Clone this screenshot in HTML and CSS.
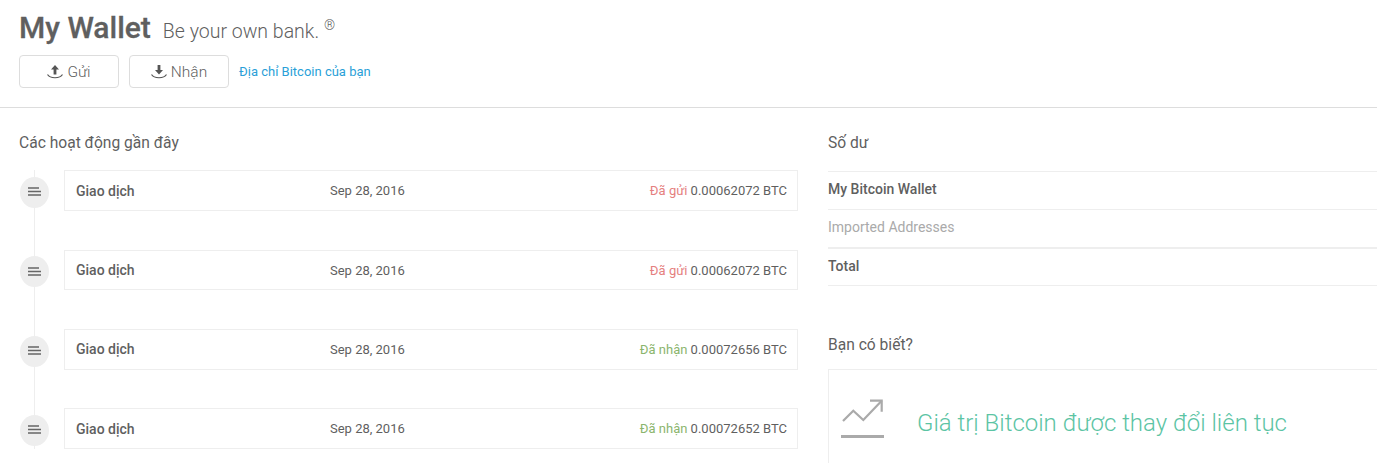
FILE: index.html
```html
<!DOCTYPE html>
<html lang="vi">
<head>
<meta charset="UTF-8">
<meta name="viewport" content="width=device-width, initial-scale=1.0">
<title>My Wallet</title>
<link rel="stylesheet" href="styles.css">
</head>
<body>
<header class="header">
  <div class="title-row">
    <h1>My Wallet</h1>
    <span class="tagline">Be your own bank.</span>
    <sup class="reg">®</sup>
  </div>
  <div class="actions">
    <button class="btn">
      <svg class="btn-icon" viewBox="0 0 16 14"><path d="M8 0 L12 4.5 H9.4 V9.5 H6.6 V4.5 H4 Z" fill="#555"/><path d="M0.5 9.5 C3 13.8 13 13.8 15.5 9.5" fill="none" stroke="#555" stroke-width="1.2"/></svg>
      Gửi
    </button>
    <button class="btn">
      <svg class="btn-icon" viewBox="0 0 16 14"><path d="M6.6 0 H9.4 V5 H12 L8 9.5 L4 5 H6.6 Z" fill="#555"/><path d="M0.5 9.5 C3 13.8 13 13.8 15.5 9.5" fill="none" stroke="#555" stroke-width="1.2"/></svg>
      Nhận
    </button>
    <a class="address-link" href="#">Địa chỉ Bitcoin của bạn</a>
  </div>
</header>

<main class="main">
  <section class="activity">
    <h2 class="section-title">Các hoạt động gần đây</h2>
    <div class="timeline">
      <div class="item">
        <div class="dot"><svg class="dot-icon" viewBox="0 0 13 10"><path d="M0 1 H11 M0 4.5 H13 M0 8 H13" stroke="#666" stroke-width="1.4"/></svg></div>
        <div class="card">
          <span class="card-name">Giao dịch</span>
          <span class="card-date">Sep 28, 2016</span>
          <span class="card-amount"><span class="sent">Đã gửi</span> 0.00062072 BTC</span>
        </div>
      </div>
      <div class="item">
        <div class="dot"><svg class="dot-icon" viewBox="0 0 13 10"><path d="M0 1 H11 M0 4.5 H13 M0 8 H13" stroke="#666" stroke-width="1.4"/></svg></div>
        <div class="card">
          <span class="card-name">Giao dịch</span>
          <span class="card-date">Sep 28, 2016</span>
          <span class="card-amount"><span class="sent">Đã gửi</span> 0.00062072 BTC</span>
        </div>
      </div>
      <div class="item">
        <div class="dot"><svg class="dot-icon" viewBox="0 0 13 10"><path d="M0 1 H11 M0 4.5 H13 M0 8 H13" stroke="#666" stroke-width="1.4"/></svg></div>
        <div class="card">
          <span class="card-name">Giao dịch</span>
          <span class="card-date">Sep 28, 2016</span>
          <span class="card-amount"><span class="received">Đã nhận</span> 0.00072656 BTC</span>
        </div>
      </div>
      <div class="item">
        <div class="dot"><svg class="dot-icon" viewBox="0 0 13 10"><path d="M0 1 H11 M0 4.5 H13 M0 8 H13" stroke="#666" stroke-width="1.4"/></svg></div>
        <div class="card">
          <span class="card-name">Giao dịch</span>
          <span class="card-date">Sep 28, 2016</span>
          <span class="card-amount"><span class="received">Đã nhận</span> 0.00072652 BTC</span>
        </div>
      </div>
    </div>
  </section>

  <aside class="side">
    <h2 class="section-title">Số dư</h2>
    <ul class="balances">
      <li class="strong">My Bitcoin Wallet</li>
      <li class="muted">Imported Addresses</li>
      <li class="strong total">Total</li>
    </ul>
    <h2 class="section-title tip-title">Bạn có biết?</h2>
    <div class="tip">
      <svg class="tip-icon" viewBox="0 0 43 40"><path d="M2 23 L12.3 12.7 L22.3 22 L40.7 2.7" fill="none" stroke="#aaa" stroke-width="2.2"/><path d="M29 2.7 H40.7 V13.7" fill="none" stroke="#aaa" stroke-width="2.2"/><rect x="0" y="37" width="43" height="3" fill="#aaa"/></svg>
      <p class="tip-text">Giá trị Bitcoin được thay đổi liên tục</p>
    </div>
  </aside>
</main>
</body>
</html>
```

FILE: styles.css
```css
html, body {
  height: 100%;
  overflow: hidden;
}

body {
  margin: 0;
  font-family: Roboto, "Liberation Sans", sans-serif;
  color: #5f5f5f;
  background-color: #fff;
}

.header {
  padding: 10px 19px 19px;
  border-bottom: 1px solid #ddd;
}

.title-row {
  display: flex;
  align-items: baseline;
  height: 38px;
  margin-bottom: 7px;
}

h1 {
  margin: 0;
  font-size: 30px;
  font-weight: 500;
  line-height: 36px;
  color: #5f5f5f;
  -webkit-text-stroke: 0.3px #5f5f5f;
}

.tagline {
  margin-left: 12px;
  font-size: 19.5px;
  font-weight: 300;
}

.reg {
  margin-left: 5px;
  font-size: 14px;
  font-weight: 300;
  align-self: flex-start;
  line-height: 30px;
}

.actions {
  display: flex;
  align-items: center;
  gap: 10px;
}

.btn {
  display: flex;
  align-items: center;
  justify-content: center;
  gap: 4px;
  width: 100px;
  height: 33px;
  padding: 0;
  background-color: #fff;
  border: 1px solid #ddd;
  border-radius: 4px;
  font-family: inherit;
  font-size: 15.5px;
  font-weight: 300;
  color: #5f5f5f;
}

.btn-icon {
  width: 16px;
  height: 14px;
}

.address-link {
  font-size: 13px;
  color: #2a9fd8;
  text-decoration: none;
}

.main {
  display: flex;
  gap: 30px;
  padding: 0 0 0 19px;
}

.activity {
  flex: 0 0 779px;
}

.side {
  flex: 1;
  margin-right: -40px;
}

.section-title {
  margin: 0;
  padding-top: 26px;
  height: 36.4px;
  font-size: 15.6px;
  font-weight: 400;
  line-height: 18px;
}

.timeline {
  position: relative;
}

.timeline::before {
  content: "";
  position: absolute;
  left: 15px;
  top: 0;
  bottom: 0;
  width: 1px;
  background-color: #eee;
}

.item {
  position: relative;
  display: flex;
  align-items: flex-start;
  gap: 15px;
  margin-bottom: 38.73px;
}

.dot {
  display: flex;
  align-items: center;
  justify-content: center;
  flex: 0 0 29px;
  height: 31px;
  margin: 6.6px 0 0 1px;
  border-radius: 50%;
  background-color: #eee;
}

.dot-icon {
  width: 13px;
  height: 10px;
  margin-right: 1px;
}

.card {
  display: flex;
  flex: 1;
  align-items: center;
  box-sizing: border-box;
  height: 40.6px;
  padding: 0 10px 0 11px;
  border: 1px solid #eee;
  background-color: #fff;
  font-size: 13px;
}

.card-name {
  width: 254px;
  font-size: 14px;
  font-weight: 500;
}

.card-amount {
  margin-left: auto;
}

.sent {
  color: #e58080;
}

.received {
  color: #8bb56d;
}

.balances {
  margin: 1px 0 0;
  padding: 0;
  list-style: none;
  font-size: 14px;
}

.balances li {
  height: 38px;
  line-height: 34px;
  border-top: 1px solid #eee;
  box-sizing: border-box;
}

.balances li:last-child {
  border-bottom: 1px solid #eee;
  height: 39px;
}

.strong {
  font-weight: 500;
}

.muted {
  color: #aaa;
}

.balances .total {
  border-top: 2px solid #eee;
}

.tip-title {
  margin-top: 23px;
  padding-top: 27px;
  height: 32.4px;
}

.tip {
  display: flex;
  align-items: flex-start;
  gap: 33px;
  height: 200px;
  padding: 28px 12px;
  border: 1px solid #eee;
}

.tip-icon {
  flex: 0 0 43px;
  height: 40px;
}

.tip-text {
  margin: 11px 0 0;
  font-size: 24px;
  font-weight: 300;
  color: #5cc4a4;
}
```
